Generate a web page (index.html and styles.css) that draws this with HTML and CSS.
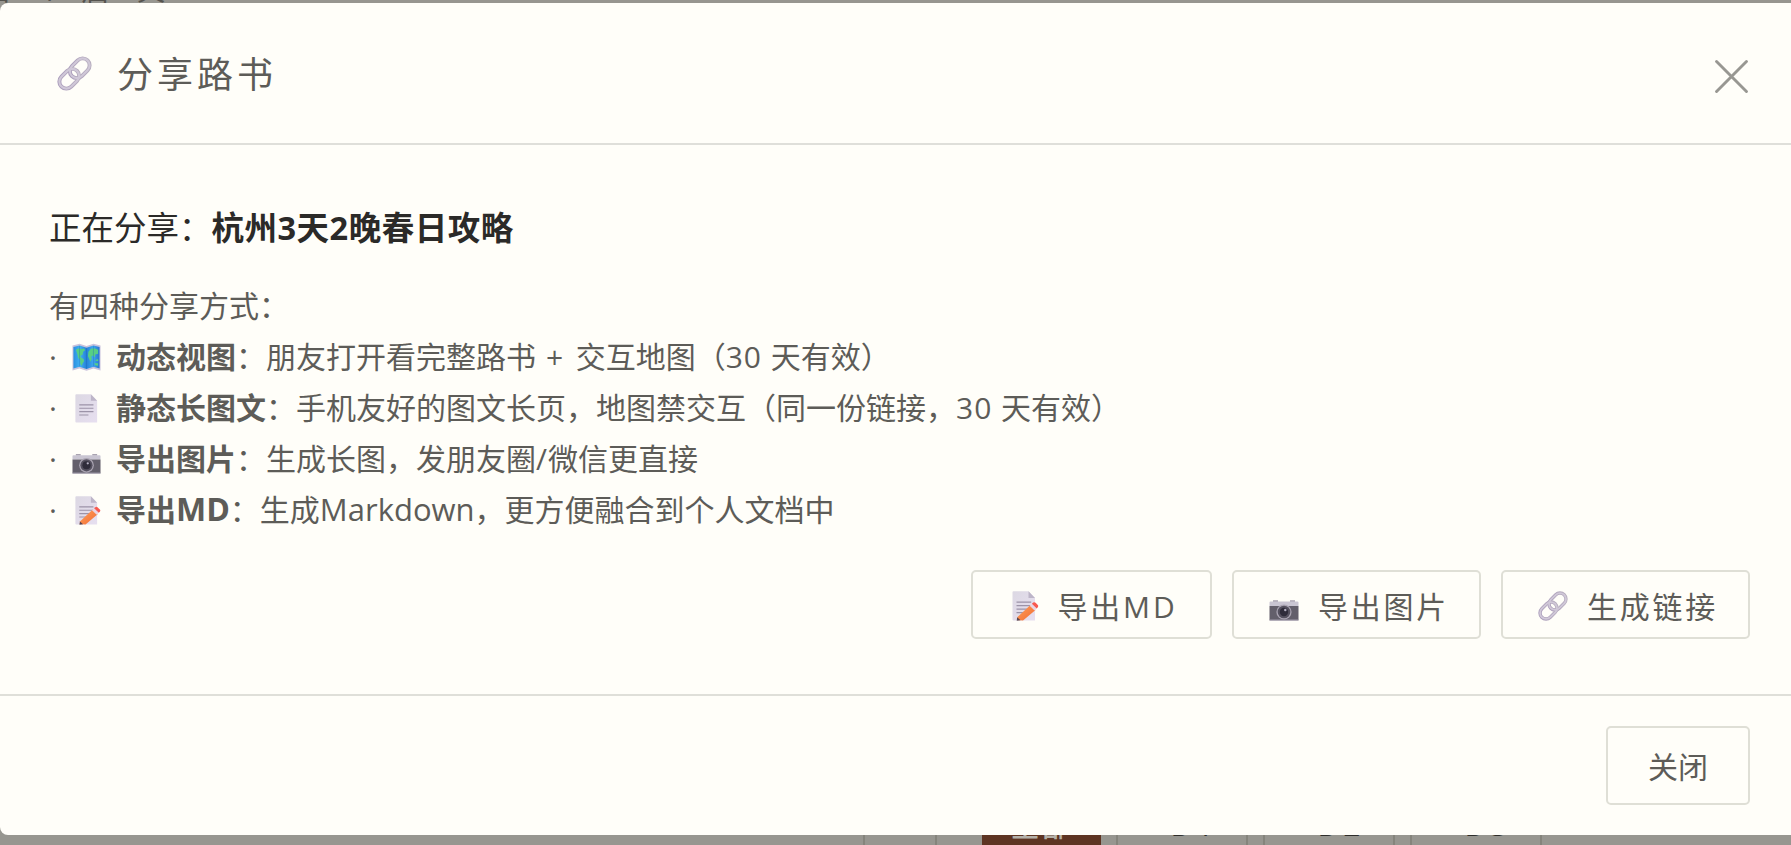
FILE: index.html
```html
<!DOCTYPE html>
<html lang="zh-CN">
<head>
  <meta charset="UTF-8" />
  <meta name="viewport" content="width=device-width, initial-scale=1.0"/>
  <title>分享路书</title>
  <link rel="stylesheet" href="styles.css">
</head>
<body>
  <svg class="sprite" width="0" height="0" aria-hidden="true">
    <defs>
      <linearGradient id="paper" x1="0" y1="0" x2="1" y2="1">
        <stop offset="0" stop-color="#dcd8e3"/>
        <stop offset="1" stop-color="#e7dff0"/>
      </linearGradient>
      <linearGradient id="metal" gradientUnits="userSpaceOnUse" x1="-10" y1="-7" x2="10" y2="7">
        <stop offset="0" stop-color="#a899ba"/>
        <stop offset="1" stop-color="#b9b1bf"/>
      </linearGradient>
      <linearGradient id="sea" x1="0" y1="0" x2="1" y2="0">
        <stop offset="0" stop-color="#2b8fe0"/>
        <stop offset=".25" stop-color="#42b0f2"/>
        <stop offset=".5" stop-color="#2480d8"/>
        <stop offset=".75" stop-color="#3fa9ef"/>
        <stop offset="1" stop-color="#2874cf"/>
      </linearGradient>
      <linearGradient id="pencil" x1="0" y1="0" x2="1" y2="1">
        <stop offset="0" stop-color="#ffa05a"/>
        <stop offset="1" stop-color="#f26b32"/>
      </linearGradient>
    </defs>
    <symbol id="icon-link" viewBox="0 0 30 30">
      <g fill="none" stroke="url(#metal)" stroke-width="3.4">
        <rect x="-9.5" y="-6" width="19" height="12" rx="6" transform="translate(19.500 10.500) rotate(-45)"/>
        <rect x="-9.5" y="-6" width="19" height="12" rx="6" transform="translate(10.500 19.500) rotate(-45)"/>
      </g>
      <g fill="none" stroke="#d0c8d8" stroke-width="1.800">
        <rect x="-9.5" y="-6" width="19" height="12" rx="6" transform="translate(19.500 10.500) rotate(-45)"/>
        <rect x="-9.5" y="-6" width="19" height="12" rx="6" transform="translate(10.500 19.500) rotate(-45)"/>
      </g>
    </symbol>
    <symbol id="icon-map" viewBox="0 0 30 30">
      <path fill="#c9c2dc" d="M.5 2.5 7.800.8 15 3.200 22.200.8l7.300 1.700v26l-7.300-2L15 28.800l-7.200-2.300-7.300 2z"/>
      <path fill="url(#sea)" d="M1.500 4.200 7.800 2.500 15 4.800l7.200-2.300 6.300 1.700v22.200l-6.300-1.800L15 27l-7.200-2.400-6.300 1.800z"/>
      <path fill="#57cf85" d="m4 7 3-1.500 3 1 2.500-1 1 2-2 1.500-.5 3-2.500 1.500 1 1.500 2.500 1.500.5 2.500-1.500 2-1 2.500-1.500-2v-4l-2-2-1-4zM17 9l2.500-3 3.500-.5 4 1.500v4l-3 1-.5 3-2-2-1.500 1 .5 2.500-1.500 3-1.500-3.500-1-2.500zM24 18l2-1.500 1.500 1-1 1.500zM23 21h4v2.500l-3-.5z"/>
      <path stroke="#1d65b5" stroke-opacity=".35" d="M7.800 3v21.500M15 5v21.500M22.200 3v21.500"/>
    </symbol>
    <symbol id="icon-page" viewBox="0 0 30 30">
      <path fill="url(#paper)" d="M4.500.3h15L26 7.100v22.400H4.500a1 1 0 0 1-1-1V1.300a1 1 0 0 1 1-1z"/>
      <path fill="#bdb5c8" d="M19.500.3 26 7.100h-6.500z"/>
      <path stroke="#9c93a8" stroke-width="1.200" d="M7.500 11.200h14.700M7.500 14.700h14.700M7.500 18.200h14.700M7.500 21.700h9.500"/>
    </symbol>
    <symbol id="icon-camera" viewBox="0 0 30 30">
      <path fill="#a9a3b0" d="M4 9.200h5v2H4zM21 9.200h5v2h-5z"/>
      <path fill="#c9c5d2" d="M1.500 10.500h27a1 1 0 0 1 1 1V15H.5v-3.500a1 1 0 0 1 1-1z"/>
      <path fill="#635f6b" d="M.5 15h29v14.200H.5z"/>
      <path fill="#a09aaa" d="M.5 28.500h29v1.200H.5z"/>
      <circle cx="15" cy="21" r="7.600" fill="#aaa4b2"/>
      <circle cx="15" cy="21" r="6.300" fill="#55515f"/>
      <circle cx="15" cy="21" r="4.200" fill="#2f2c3a"/>
      <circle cx="16.300" cy="19" r="1.200" fill="#b5b0c2"/>
    </symbol>
    <symbol id="icon-memo" viewBox="0 0 30 30">
      <use href="#icon-page"/>
      <path fill="url(#pencil)" d="m21.500 14 5 5L14 29.500l-6-.5.500-3z"/>
      <path fill="#5a4651" d="m8.200 26.300 3.300 3-3.800.4z"/>
      <path fill="#e9d5e3" d="m20.700 14.700 2.200-2 4.800 4.700-2.200 2z"/>
      <path fill="#f8594f" d="m22.900 12.700 1.300-1.100q1.300-.9 2.400.2l2.200 2.200q1 1.100 0 2.200l-1.100 1.200z"/>
    </symbol>
  </svg>

  <!-- page behind the dialog -->
  <div class="backdrop">
    <div class="page-top"><span>日</span><span class="slash">/</span><span>启</span><span>义</span></div>
    <div class="day-tabs">
      <div class="tab tab-small"></div>
      <div class="tab active">全部</div>
      <div class="tab">D1</div>
      <div class="tab">D2</div>
      <div class="tab">D3</div>
    </div>
  </div>

  <div class="modal">
    <div class="modal-header">
      <svg class="title-icon"><use href="#icon-link"/></svg>
      <h2>分享路书</h2>
      <button class="close-x" aria-label="关闭">
        <svg viewBox="0 0 32 32"><path d="M1.500 1.500l29 29M30.500 1.500L1.500 30.500"/></svg>
      </button>
    </div>

    <div class="modal-body">
      <p class="sharing">正在分享：<strong>杭州3天2晚春日攻略</strong></p>
      <div class="ways">
        <div>有四种分享方式：</div>
        <div class="way"><i>·</i><svg><use href="#icon-map"/></svg><span><b>动态视图</b>：朋友打开看完整路书<span class="plus"> + </span>交互地图（<span class="num">30 </span>天有效）</span></div>
        <div class="way"><i>·</i><svg><use href="#icon-page"/></svg><span><b>静态长图文</b>：手机友好的图文长页，地图禁交互（同一份链接，<span class="num">30 </span>天有效）</span></div>
        <div class="way"><i>·</i><svg><use href="#icon-camera"/></svg><span><b>导出图片</b>：生成长图，发朋友圈<span class="num">/</span>微信更直接</span></div>
        <div class="way"><i>·</i><svg><use href="#icon-memo"/></svg><span><b>导出<span class="md">MD</span></b>：生成<span class="latin">Markdown</span>，更方便融合到个人文档中</span></div>
      </div>
      <div class="actions">
        <button class="btn btn-md"><svg><use href="#icon-memo"/></svg>导出MD</button>
        <button class="btn"><svg><use href="#icon-camera"/></svg>导出图片</button>
        <button class="btn"><svg><use href="#icon-link"/></svg>生成链接</button>
      </div>
    </div>

    <div class="modal-footer">
      <button class="btn btn-close">关闭</button>
    </div>
  </div>
</body>
</html>
```
FILE: styles.css
```css
* {
  box-sizing: border-box;
}
body {
  margin: 0;
  height: 845px;
  overflow: hidden;
  background: #979690;
  color: #5d5c58;
  font-family: "Open Sans", "Noto Sans CJK SC", sans-serif;
}
.sprite {
  position: absolute;
}
.backdrop {
  height: 845px;
  display: flex;
  flex-direction: column;
  justify-content: space-between;
}
.page-top {
  height: 4px;
  display: flex;
  align-items: flex-end;
  gap: 28px;
  overflow: hidden;
  font-size: 28px;
  line-height: 28px;
  color: #55544f;
}
.page-top span:first-child {
  margin-left: -16px;
}
.page-top .slash {
  padding-left: 8px;
  margin-right: -5px;
}
.day-tabs {
  height: 10px;
  overflow: hidden;
  display: flex;
  gap: 15px;
  padding-left: 863px;
}
.tab {
  width: 132px;
  height: 60px;
  margin-top: -34px;
  border: 2px solid #85847c;
  border-width: 0 2px;
  text-align: center;
  text-indent: 24px;
  font-size: 30px;
  line-height: 48px;
  letter-spacing: 4px;
  color: #2e2d2a;
}
.tab-small {
  width: 74px;
  margin-right: 30px;
}
.tab.active {
  width: 119px;
  background: #5e3422;
  border: none;
  color: #b5b1a9;
  font-weight: 500;
  font-size: 29px;
  letter-spacing: 2px;
  line-height: 50px;
  text-indent: 0;
}
.modal {
  position: absolute;
  top: 3px;
  left: 0;
  width: 1791px;
  height: 832px;
  display: flex;
  flex-direction: column;
  background: #fffef9;
  border-radius: 8px 0 0 8px;
}
.modal-header {
  height: 142px;
  display: flex;
  align-items: center;
  padding: 0 43px 0 57px;
  border-bottom: 2px solid #dfdfda;
}
.title-icon {
  width: 35px;
  height: 35px;
}
h2 {
  margin: -2px auto 0 25px;
  font-size: 36px;
  font-weight: 400;
  letter-spacing: 4px;
}
.close-x {
  width: 33px;
  height: 33px;
  padding: 0;
  margin-top: 6px;
  border: none;
  background: none;
}
.close-x svg {
  display: block;
  width: 33px;
  height: 33px;
  fill: none;
  stroke: #989792;
  stroke-width: 2.8;
  stroke-linecap: round;
}
.modal-body {
  flex: 1;
  padding: 55px 41px 0 49px;
}
.sharing {
  margin: 0 0 25px;
  font-size: 32.5px;
  line-height: 55px;
  color: #2b2a28;
}
.sharing strong {
  letter-spacing: .5px;
}
.ways {
  font-size: 30px;
  line-height: 51px;
}
.way {
  display: flex;
  align-items: center;
  height: 51px;
  white-space: nowrap;
}
.way i {
  width: 23px;
  font-style: normal;
}
.way svg {
  width: 29px;
  height: 29px;
  margin: 1px 15px 0 0;
}
.plus {
  letter-spacing: 2.3px;
}
.num {
  letter-spacing: 1px;
}
.md {
  font-size: 32px;
  line-height: 1;
}
.latin {
  font-size: 31px;
  line-height: 1;
}
.actions {
  display: flex;
  justify-content: flex-end;
  gap: 20px;
  margin-top: 35px;
}
.btn {
  display: flex;
  align-items: center;
  justify-content: center;
  width: 249px;
  height: 69px;
  padding: 0 0 0 5px;
  border: 2px solid #dfdfd6;
  border-radius: 5px;
  background: #fffef9;
  color: #5d5c58;
  font-family: inherit;
  font-size: 30px;
  letter-spacing: 2.8px;
}
.btn svg {
  width: 30px;
  height: 30px;
  margin: 3px 19px 0 0;
}
.btn-md {
  width: 241px;
  padding-left: 3px;
}
.modal-footer {
  height: 141px;
  display: flex;
  justify-content: flex-end;
  align-items: center;
  padding-right: 41px;
  border-top: 2px solid #dfdfd9;
}
.btn-close {
  width: 144px;
  height: 79px;
  padding: 0 0 2px;
  letter-spacing: 0;
}
```
